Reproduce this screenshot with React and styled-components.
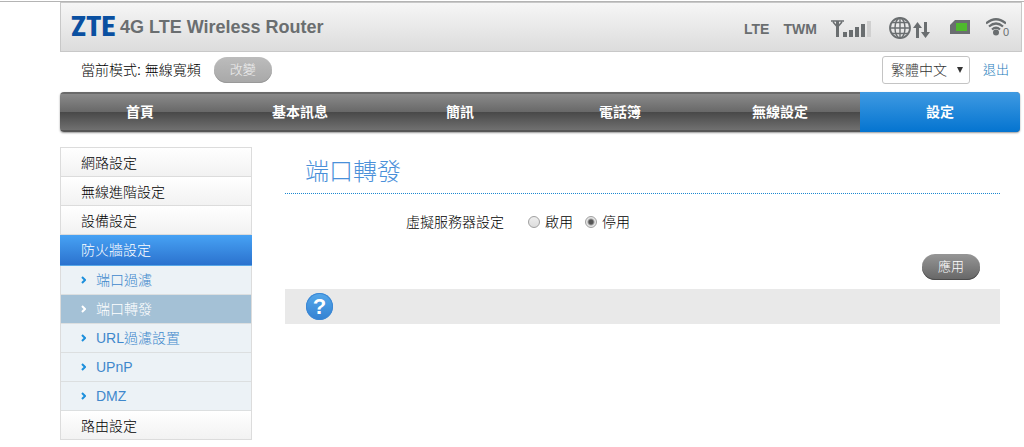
import React, { useState } from "react";
import styled, { createGlobalStyle } from "styled-components";

const GlobalStyle = createGlobalStyle`
  * {
    box-sizing: border-box;
  }
  body {
    margin: 0;
    background: #fff;
    color: #000;
    font-family: "Liberation Sans", Arial, "Noto Sans CJK TC", sans-serif;
    font-size: 14px;
    font-weight: 300;
    line-height: 20px;
  }
  button, select, input {
    font: inherit;
  }
  ul {
    list-style: none;
    margin: 0;
    padding: 0;
  }
`;

const Page = styled.div`
  border-top: 1px solid #fff;
  box-shadow: inset 0 1px #b4b4b4;
  padding: 1px 2px 0 60px;
`;

const Header = styled.header`
  display: flex;
  align-items: center;
  height: 50px;
  padding: 0 12px 0 10px;
  border: 1px solid #c8c8c8;
  background: linear-gradient(#f6f6f6, #dcdcdc);
  color: #6a6e70;
`;

const Logo = styled.span`
  width: 45px;
  color: #0a50a1;
  font-family: "Roboto Condensed", "Open Sans Condensed", Lato, sans-serif;
  font-size: 28px;
  font-weight: 900;
  line-height: 48px;
`;

const Title = styled.h1`
  margin: 0 auto 0 4px;
  font-size: 18px;
  line-height: 24px;
  font-weight: bold;
`;

const Status = styled.div`
  display: flex;
  align-items: center;
  font-weight: bold;
  padding-top: 4px;
`;

const StatusText = styled.span`
  margin-right: 14px;
`;

const StatusIcon = styled.svg`
  display: block;
  margin: 0 ${(props) => props.$gap || 0}px 2px 0;
`;

const ModeBar = styled.div`
  display: flex;
  align-items: center;
  height: 40px;
  padding: 0 13px 4px 21px;
`;

const Mode = styled.span`
  margin-right: 13px;
`;

const PillButton = styled.button`
  width: 58px;
  height: 26px;
  padding: 0;
  border: 0;
  border-radius: 13px;
  color: #fff;
  font-size: 13px;
  line-height: 24px;
  background: linear-gradient(#969696, #666);
  box-shadow: inset 0 -1px #4c4c4c;

  &:disabled {
    color: #f0f0f0;
    background: linear-gradient(#bcbcbc, #a8a8a8);
    box-shadow: inset 0 -1px #999;
  }
`;

const SelectWrap = styled.span`
  position: relative;
  margin: 0 13px 0 auto;
`;

const LangSelect = styled.select`
  display: block;
  appearance: none;
  width: 88px;
  height: 28px;
  padding: 0 20px 0 8px;
  border: 1px solid #c4c4c4;
  border-radius: 3px;
  background: #fff;
  color: #333;
`;

const SelectArrow = styled.svg`
  position: absolute;
  top: 11px;
  right: 7px;
  pointer-events: none;
`;

const Logout = styled.a`
  color: #1a7cba;
  font-size: 13px;
  text-decoration: none;
`;

const Nav = styled.nav`
  margin-right: 2px;
  border-radius: 4px;
  overflow: hidden;
  background: linear-gradient(#6a6a6a 0 2px, #8a8a8a 2px, #686868 50%, #484848 50%, #707070 38px, #565656 38px);
  box-shadow: 0 1px 2px #999;
`;

const NavList = styled.ul`
  display: flex;
`;

const NavItem = styled.li`
  flex: 1;
`;

const NavLink = styled.a`
  display: block;
  line-height: 40px;
  color: #fff;
  font-weight: bold;
  text-align: center;
  text-decoration: none;
  background: ${(props) => (props.$active ? "linear-gradient(#3f9ae2, #0474d0)" : "none")};
`;

const Columns = styled.div`
  display: flex;
  align-items: flex-start;
  padding: 15px 22px 0 0;
`;

const Sidebar = styled.ul`
  flex: none;
  width: 192px;
  margin-right: 33px;
  border: 1px solid #dcdcdc;
  border-bottom: 0;
`;

const SideLink = styled.a`
  display: block;
  height: ${(props) => (props.$active ? 31 : 29)}px;
  margin: ${(props) => (props.$active ? "0 -1px" : 0)};
  padding-left: ${(props) => (props.$active ? 21 : 20)}px;
  border-bottom: 1px solid ${(props) => (props.$active ? "#58a8e8" : "#dcdcdc")};
  line-height: 30px;
  text-decoration: none;
  color: ${(props) => (props.$active ? "#fff" : "#000")};
  background: ${(props) => (props.$active ? "linear-gradient(#47a2f4, #2b72ce)" : "linear-gradient(#fff, #f2f2f2)")};
`;

const SubLink = styled.a`
  display: flex;
  align-items: center;
  gap: 10px;
  height: 29px;
  padding-left: 20px;
  border-bottom: 1px solid #dcdfe0;
  text-decoration: none;
  color: ${(props) => (props.$active ? "#fff" : "#3f88cc")};
  background: ${(props) => (props.$active ? "#a4c1d6" : "#ecf2f6")};
`;

const Chevron = styled.svg`
  color: ${(props) => (props.$active ? "#fff" : "#1c8fdc")};
`;

const Main = styled.main`
  flex: 1;
`;

const PageTitle = styled.h2`
  margin: 0 0 18px;
  padding: 8px 20px 5px;
  border-bottom: 1px dotted #1c88d0;
  color: #4a90d9;
  font-size: 24px;
  font-weight: 300;
  line-height: 33px;
`;

const Field = styled.fieldset`
  display: flex;
  align-items: center;
  margin: 0;
  padding: 0;
  border: 0;
`;

const FieldLabel = styled.span`
  width: 219px;
  margin-right: 24px;
  text-align: right;
`;

const Option = styled.label`
  display: flex;
  align-items: center;
  gap: 5px;
  margin-right: 12px;
`;

const Radio = styled.input`
  appearance: none;
  width: 12px;
  height: 12px;
  margin: 0;
  border: 1px solid #a0a0a0;
  border-radius: 50%;
  background: linear-gradient(#eee, #ddd);

  &:checked {
    background: radial-gradient(circle, #555 0 2px, #e6e6e6 4px);
  }
`;

const Actions = styled.div`
  display: flex;
  justify-content: flex-end;
  padding: 22px 20px 9px;
`;

const HelpBar = styled.div`
  height: 35px;
  padding: 4px 21px;
  background: #e9e9e9;
`;

const HelpButton = styled.button`
  display: block;
  width: 27px;
  height: 27px;
  padding: 0;
  border: 0;
  border-radius: 50%;
  background: linear-gradient(#55a8ea, #3481d2);
  box-shadow: inset 0 0 0 1px #3c87d4;
  color: #fff;
  font-family: "Liberation Sans", sans-serif;
  font-size: 22px;
  font-weight: bold;
  line-height: 27px;
`;

const tabs = ["首頁", "基本訊息", "簡訊", "電話簿", "無線設定", "設定"];

const menu = [
  { name: "網路設定" },
  { name: "無線進階設定" },
  { name: "設備設定" },
  { name: "防火牆設定", children: ["端口過濾", "端口轉發", "URL過濾設置", "UPnP", "DMZ"] },
  { name: "路由設定" },
];

const Signal = () => (
  <StatusIcon $gap={18} width="40" height="18" viewBox="0 0 40 18">
    <path d="M0 2h13M2 3l4.500 5L11 3" fill="none" stroke="#6a6e70" strokeWidth="1.6" />
    <path d="M5 2h3v16H5zM12 13h4v5h-4zM18 11h4v7h-4zM24 8h4v10h-4zM30 5h4v13h-4z" fill="#6a6e70" />
    <path d="M36 2h4v16h-4z" fill="#d0d0d0" />
  </StatusIcon>
);

const Network = () => (
  <StatusIcon $gap={19} width="42" height="24" viewBox="0 0 42 24">
    <g fill="none" stroke="#6a6e70" strokeWidth="1.4">
      <circle cx="11" cy="12" r="10" strokeWidth="1.8" />
      <ellipse cx="11" cy="12" rx="5" ry="10" />
      <path d="M11 2v20M1 12h20M3 6.5h16M3 17.5h16" />
    </g>
    <path d="M28.500 6l4.500 6h-3v10h-3V12h-3zM36.500 22L32 16h3V6h3v10h3z" fill="#6a6e70" />
  </StatusIcon>
);

const Sim = () => (
  <StatusIcon $gap={16} width="20" height="22" viewBox="0 0 20 22">
    <path d="M5 3h15v14H0V8z" fill="#6a6e70" />
    <path d="M6 6h11v8H6z" fill="#4fba2c" />
  </StatusIcon>
);

const Wifi = () => (
  <StatusIcon width="20" height="22" viewBox="0 0 20 22">
    <g fill="none" stroke="#6a6e70" strokeWidth="2.2">
      <path d="M0 6.500Q10-2 20 6.500" />
      <path d="M3 9.500Q10 3.500 17 9.500" />
      <path d="M6 12.500Q10 9 14 12.500" />
    </g>
    <circle cx="10" cy="15.500" r="3" fill="#6a6e70" />
  </StatusIcon>
);

const WifiCount = styled.span`
  align-self: flex-end;
  margin-left: -3px;
  font-size: 11px;
  font-weight: normal;
  line-height: 20px;
`;

const App = () => {
  const [lang, setLang] = useState("zh-tw");
  const [server, setServer] = useState("off");
  return (
    <>
      <GlobalStyle />
      <Page>
        <Header>
          <Logo>ZTE</Logo>
          <Title>4G LTE Wireless Router</Title>
          <Status>
            <StatusText>LTE</StatusText>
            <StatusText>TWM</StatusText>
            <Signal />
            <Network />
            <Sim />
            <Wifi />
            <WifiCount>0</WifiCount>
          </Status>
        </Header>

        <ModeBar>
          <Mode>當前模式: 無線寬頻</Mode>
          <PillButton type="button" disabled>改變</PillButton>
          <SelectWrap>
            <LangSelect aria-label="語言" value={lang} onChange={(e) => setLang(e.target.value)}>
              <option value="zh-tw">繁體中文</option>
              <option value="en">English</option>
            </LangSelect>
            <SelectArrow width="6" height="6" viewBox="0 0 6 6">
              <path d="M0 0h6L3 6z" fill="#333" />
            </SelectArrow>
          </SelectWrap>
          <Logout href="#logout">退出</Logout>
        </ModeBar>

        <Nav>
          <NavList>
            {tabs.map((tab) => (
              <NavItem key={tab}>
                <NavLink href="#" $active={tab === "設定"}>{tab}</NavLink>
              </NavItem>
            ))}
          </NavList>
        </Nav>

        <Columns>
          <Sidebar>
            {menu.map((item) => (
              <li key={item.name}>
                <SideLink href="#" $active={!!item.children}>{item.name}</SideLink>
                {item.children && (
                  <ul>
                    {item.children.map((sub) => (
                      <li key={sub}>
                        <SubLink href="#" $active={sub === "端口轉發"}>
                          <Chevron $active={sub === "端口轉發"} width="5" height="8" viewBox="0 0 5 8">
                            <path d="M1 1l3 3-3 3" fill="none" stroke="currentColor" strokeWidth="2" />
                          </Chevron>
                          {sub}
                        </SubLink>
                      </li>
                    ))}
                  </ul>
                )}
              </li>
            ))}
          </Sidebar>

          <Main>
            <PageTitle>端口轉發</PageTitle>
            <Field role="radiogroup" aria-labelledby="server-label">
              <FieldLabel id="server-label">虛擬服務器設定</FieldLabel>
              <Option>
                <Radio type="radio" name="server" checked={server === "on"} onChange={() => setServer("on")} />
                啟用
              </Option>
              <Option>
                <Radio type="radio" name="server" checked={server === "off"} onChange={() => setServer("off")} />
                停用
              </Option>
            </Field>
            <Actions>
              <PillButton type="button">應用</PillButton>
            </Actions>
            <HelpBar>
              <HelpButton type="button" aria-label="說明">?</HelpButton>
            </HelpBar>
          </Main>
        </Columns>
      </Page>
    </>
  );
};
export default App;
